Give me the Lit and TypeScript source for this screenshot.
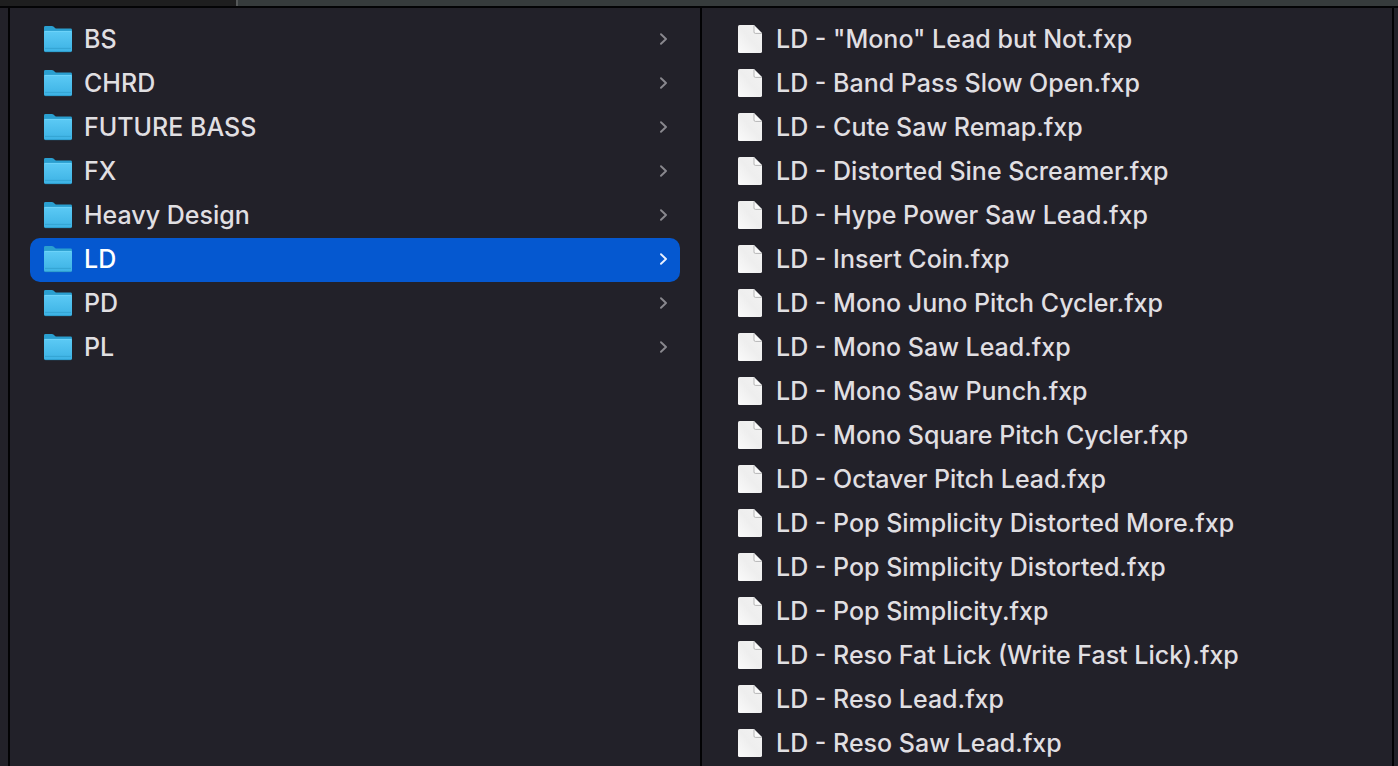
import { LitElement, html, css, svg } from "lit";
import { customElement, state } from "lit/decorators.js";
import { classMap } from "lit/directives/class-map.js";

const FOLDERS = ["BS", "CHRD", "FUTURE BASS", "FX", "Heavy Design", "LD", "PD", "PL"];

const FILES = [
  'LD - "Mono" Lead but Not.fxp',
  "LD - Band Pass Slow Open.fxp",
  "LD - Cute Saw Remap.fxp",
  "LD - Distorted Sine Screamer.fxp",
  "LD - Hype Power Saw Lead.fxp",
  "LD - Insert Coin.fxp",
  "LD - Mono Juno Pitch Cycler.fxp",
  "LD - Mono Saw Lead.fxp",
  "LD - Mono Saw Punch.fxp",
  "LD - Mono Square Pitch Cycler.fxp",
  "LD - Octaver Pitch Lead.fxp",
  "LD - Pop Simplicity Distorted More.fxp",
  "LD - Pop Simplicity Distorted.fxp",
  "LD - Pop Simplicity.fxp",
  "LD - Reso Fat Lick (Write Fast Lick).fxp",
  "LD - Reso Lead.fxp",
  "LD - Reso Saw Lead.fxp",
];

const folderIcon = html`<svg class="folder" viewBox="0 0 28 28" aria-hidden="true">
  <defs>
    <linearGradient id="front" x1="0" y1="0" x2="0" y2="1">
      <stop offset="0" stop-color="#5ccaf5" />
      <stop offset="1" stop-color="#3cb2e4" />
    </linearGradient>
  </defs>
  ${svg`
    <path d="M0 2.4Q0 1 1.4 1H7.8Q9 1 9.8 1.8L11 2.9Q11.8 3.6 13 3.6H26.6Q28 3.6 28 5V12H0Z" fill="#2a9fd0" />
    <path d="M0 6.8Q0 6 1 6H27Q28 6 28 6.8V25.6Q28 27 26.6 27H1.4Q0 27 0 25.6Z" fill="url(#front)" />
    <path d="M.6 6.4H27.4" stroke="#74d6fb" stroke-width=".8" />
    <path d="M1 23.4H27" stroke="#319fce" stroke-width=".8" />
    <path d="M.5 26.2Q1 26.7 1.6 26.7H26.4Q27 26.7 27.5 26.2" fill="none" stroke="#2790bf" stroke-width=".7" />
  `}
</svg>`;

const fileIcon = html`<svg class="file" viewBox="0 0 24 28" aria-hidden="true">
  <defs>
    <linearGradient id="paper" x1="1" y1="0" x2="0" y2="1">
      <stop offset="0" stop-color="#f3f3f3" />
      <stop offset=".5" stop-color="#eeeeee" />
      <stop offset="1" stop-color="#fbfbfb" />
    </linearGradient>
  </defs>
  <path d="M1.6 0H16L24 8V26.4Q24 28 22.4 28H1.6Q0 28 0 26.4V1.6Q0 0 1.6 0Z" fill="url(#paper)" />
  <path d="M16 .4V7Q16 8.4 17.4 8.4H23.8" fill="#fafafa" stroke="#a4a4a6" stroke-width=".8" />
</svg>`;

const chevron = html`<svg class="chevron" viewBox="0 0 8 12" aria-hidden="true">
  <path d="M1 1.2L6 6L1 10.8" fill="none" stroke="currentColor" stroke-width="1.9" stroke-linecap="round" stroke-linejoin="round" />
</svg>`;

@customElement("app-root")
export class AppRoot extends LitElement {
  @state() private folder = "LD";

  static styles = css`
    :host {
      display: flex;
      flex-direction: column;
      height: 100vh;
      overflow: hidden;
      background: #222129;
      color: #e0dfe2;
      font-family: Inter, "Liberation Sans", sans-serif;
      font-size: 25px;
      font-weight: 500;
      line-height: 32px;
    }
    .toolbar {
      display: flex;
      flex: none;
      height: 6px;
      background: #363b3c;
      border-bottom: 2px solid #040406;
    }
    .side {
      width: 236px;
      background: #1e1e1f;
      border-right: 2px solid #555859;
    }
    .browser {
      display: grid;
      grid-template-columns: 1fr 1fr;
      flex: 1;
      min-height: 0;
      margin: 0 4px 0 8px;
      border: solid #020204;
      border-width: 0 2px;
      column-gap: 2px;
      background: #020204;
    }
    .column {
      list-style: none;
      margin: 0;
      padding: 10px 20px;
      background: #222129;
      overflow: hidden;
    }
    .row {
      display: flex;
      align-items: center;
      box-sizing: border-box;
      width: 100%;
      height: 44px;
      margin: 0;
      padding: 0 12px 2px 14px;
      border: 0;
      border-radius: 10px;
      background: none;
      color: inherit;
      font: inherit;
      text-align: left;
      white-space: nowrap;
      outline: none;
    }
    .selected {
      background: #0558d0;
      color: #ffffff;
    }
    .name {
      flex: 1;
    }
    .folder {
      width: 28px;
      height: 28px;
      margin-right: 12px;
    }
    .file {
      width: 24px;
      height: 28px;
      margin: 0 14px 0 2px;
    }
    .chevron {
      width: 8px;
      height: 12px;
      color: #89888e;
    }
    .selected .chevron {
      color: #e8f0ff;
    }
  `;

  render() {
    return html`
      <div class="toolbar"><div class="side"></div></div>
      <main class="browser">
        <ul class="column" aria-label="Folders">
          ${FOLDERS.map(
            (name) => html`<li>
              <button
                class=${classMap({ row: true, selected: name === this.folder })}
                aria-pressed=${name === this.folder}
                @click=${() => (this.folder = name)}
              >
                ${folderIcon}<span class="name">${name}</span>${chevron}
              </button>
            </li>`
          )}
        </ul>
        <ul class="column" aria-label="Files">
          ${FILES.map(
            (name) => html`<li>
              <button class="row">${fileIcon}<span class="name">${name}</span></button>
            </li>`
          )}
        </ul>
      </main>
    `;
  }
}
